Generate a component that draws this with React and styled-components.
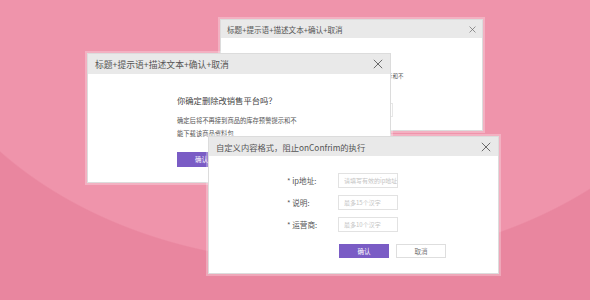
import styled, { createGlobalStyle } from 'styled-components';

const GlobalStyle = createGlobalStyle`
  html, body {
    margin: 0;
    padding: 0;
  }
  body {
    font-family: "Noto Sans CJK SC", "Noto Sans", sans-serif;
  }
`;

const Stage = styled.div`
  position: relative;
  width: 590px;
  height: 300px;
  overflow: hidden;
  background: radial-gradient(ellipse 420px 314px at 320px -51px, #ef94ab 99.6%, #e9869f 100%);
`;

// the three dialogs sit on the stage like windows on a desktop
const Dialog = styled.div`
  position: absolute;
  left: ${(p) => p.$x}px;
  top: ${(p) => p.$y}px;
  width: ${(p) => p.$w}px;
  height: ${(p) => p.$h}px;
  box-sizing: border-box;
  display: flex;
  flex-direction: column;
  background: #fff;
  border: 1px solid #dcdcdc;
  box-shadow: 0 0 0 2px rgba(255, 255, 255, 0.28);
`;

const Header = styled.div`
  flex: none;
  height: ${(p) => p.$h}px;
  display: flex;
  align-items: center;
  justify-content: space-between;
  padding: 0 ${(p) => p.$pr}px 0 ${(p) => p.$pl}px;
  background: #e9e9e9;
  color: #555;
  font-size: ${(p) => p.$fs}px;
  white-space: nowrap;
`;

const Close = ({ size }) => (
  <svg width={size} height={size} viewBox="0 0 10 10" fill="none">
    <path d="M0.8 0.8L9.2 9.2M9.2 0.8L0.8 9.2" stroke="#6a6a6a" strokeWidth="1" />
  </svg>
);

const Body = styled.div`
  flex: 1;
  display: flex;
  flex-direction: column;
  align-items: flex-start;
  padding: ${(p) => p.$pt}px 0 0 ${(p) => p.$pl}px;
`;

const Question = styled.div`
  color: #444;
  font-size: ${(p) => p.$fs}px;
  line-height: ${(p) => p.$lh}px;
  white-space: nowrap;
`;

const Desc = styled.div`
  margin-top: ${(p) => p.$mt}px;
  color: #555;
  font-size: ${(p) => p.$fs}px;
  line-height: ${(p) => p.$lh}px;
  white-space: nowrap;
`;

const ButtonRow = styled.div`
  display: flex;
  gap: ${(p) => p.$gap}px;
  margin-top: ${(p) => p.$mt}px;
  align-self: ${(p) => (p.$center ? 'center' : 'flex-start')};
`;

const Button = styled.div`
  box-sizing: border-box;
  width: ${(p) => p.$w}px;
  height: ${(p) => p.$h}px;
  display: flex;
  align-items: center;
  justify-content: center;
  font-size: 6.5px;
  background: ${(p) => (p.$primary ? '#7a5cc5' : '#fff')};
  color: ${(p) => (p.$primary ? '#fff' : '#777')};
  border: 1px solid ${(p) => (p.$primary ? '#7a5cc5' : '#dedede')};
`;

const Form = styled.div`
  display: flex;
  flex-direction: column;
  gap: 7px;
`;

const Row = styled.div`
  display: flex;
  align-items: center;
`;

const Label = styled.span`
  width: 51px;
  color: #555;
  font-size: 7.6px;
  white-space: nowrap;
`;

const Input = styled.input`
  box-sizing: border-box;
  width: 60px;
  height: 15px;
  margin: 0;
  padding: 0 0 0 5px;
  border: 1px solid #e2e2e2;
  outline: none;
  font-family: "Noto Sans CJK SC", sans-serif;
  font-size: 6px;
  color: #555;
  &::placeholder {
    color: #c4c4c4;
  }
`;

const ConfirmBody = ({ scale }) => (
  <>
    <Question $fs={scale.q} $lh={scale.qlh}>你确定删除改销售平台吗？</Question>
    <Desc $fs={scale.d} $lh={scale.dlh} $mt={scale.gap}>
      确定后将不再接到商品的库存预警提示和不
      <br />
      能下载该商品资料包
    </Desc>
  </>
);

const fields = [
  { label: '* ip地址:', hint: '请填写有效的ip地址' },
  { label: '* 说明:', hint: '最多15个汉字' },
  { label: '* 运营商:', hint: '最多10个汉字' },
];

export default function App() {
  return (
    <>
      <GlobalStyle />
      <Stage>
        <Dialog $x={220} $y={19} $w={263} $h={112}>
          <Header $h={18} $pl={6} $pr={6} $fs={7.6}>
            <span>标题+提示语+描述文本+确认+取消</span>
            <Close size={7} />
          </Header>
          <Body $pt={18} $pl={78}>
            <ConfirmBody scale={{ q: 7.2, qlh: 11, d: 5.5, dlh: 11, gap: 3.5 }} />
            <ButtonRow $gap={8} $mt={10}>
              <Button $primary $w={43} $h={14}>确认</Button>
              <Button $w={43} $h={14}>取消</Button>
            </ButtonRow>
          </Body>
        </Dialog>

        <Dialog $x={87} $y={53} $w={304} $h={130}>
          <Header $h={20} $pl={7} $pr={7} $fs={8.8}>
            <span>标题+提示语+描述文本+确认+取消</span>
            <Close size={10} />
          </Header>
          <Body $pt={20} $pl={89}>
            <ConfirmBody scale={{ q: 8.3, qlh: 12, d: 6.3, dlh: 13, gap: 7.5 }} />
            <ButtonRow $gap={7} $mt={12}>
              <Button $primary $w={49} $h={15}>确认</Button>
              <Button $w={49} $h={15}>取消</Button>
            </ButtonRow>
          </Body>
        </Dialog>

        <Dialog $x={208} $y={136} $w={291} $h={138}>
          <Header $h={19} $pl={7} $pr={7} $fs={8.3}>
            <span>自定义内容格式，阻止onConfrim的执行</span>
            <Close size={10} />
          </Header>
          <Body $pt={17} $pl={78}>
            <Form>
              {fields.map((f) => (
                <Row key={f.label}>
                  <Label>{f.label}</Label>
                  <Input placeholder={f.hint} readOnly />
                </Row>
              ))}
            </Form>
            <ButtonRow $gap={7} $mt={12} $center>
              <Button $primary $w={50} $h={14}>确认</Button>
              <Button $w={50} $h={14}>取消</Button>
            </ButtonRow>
          </Body>
        </Dialog>
      </Stage>
    </>
  );
}
